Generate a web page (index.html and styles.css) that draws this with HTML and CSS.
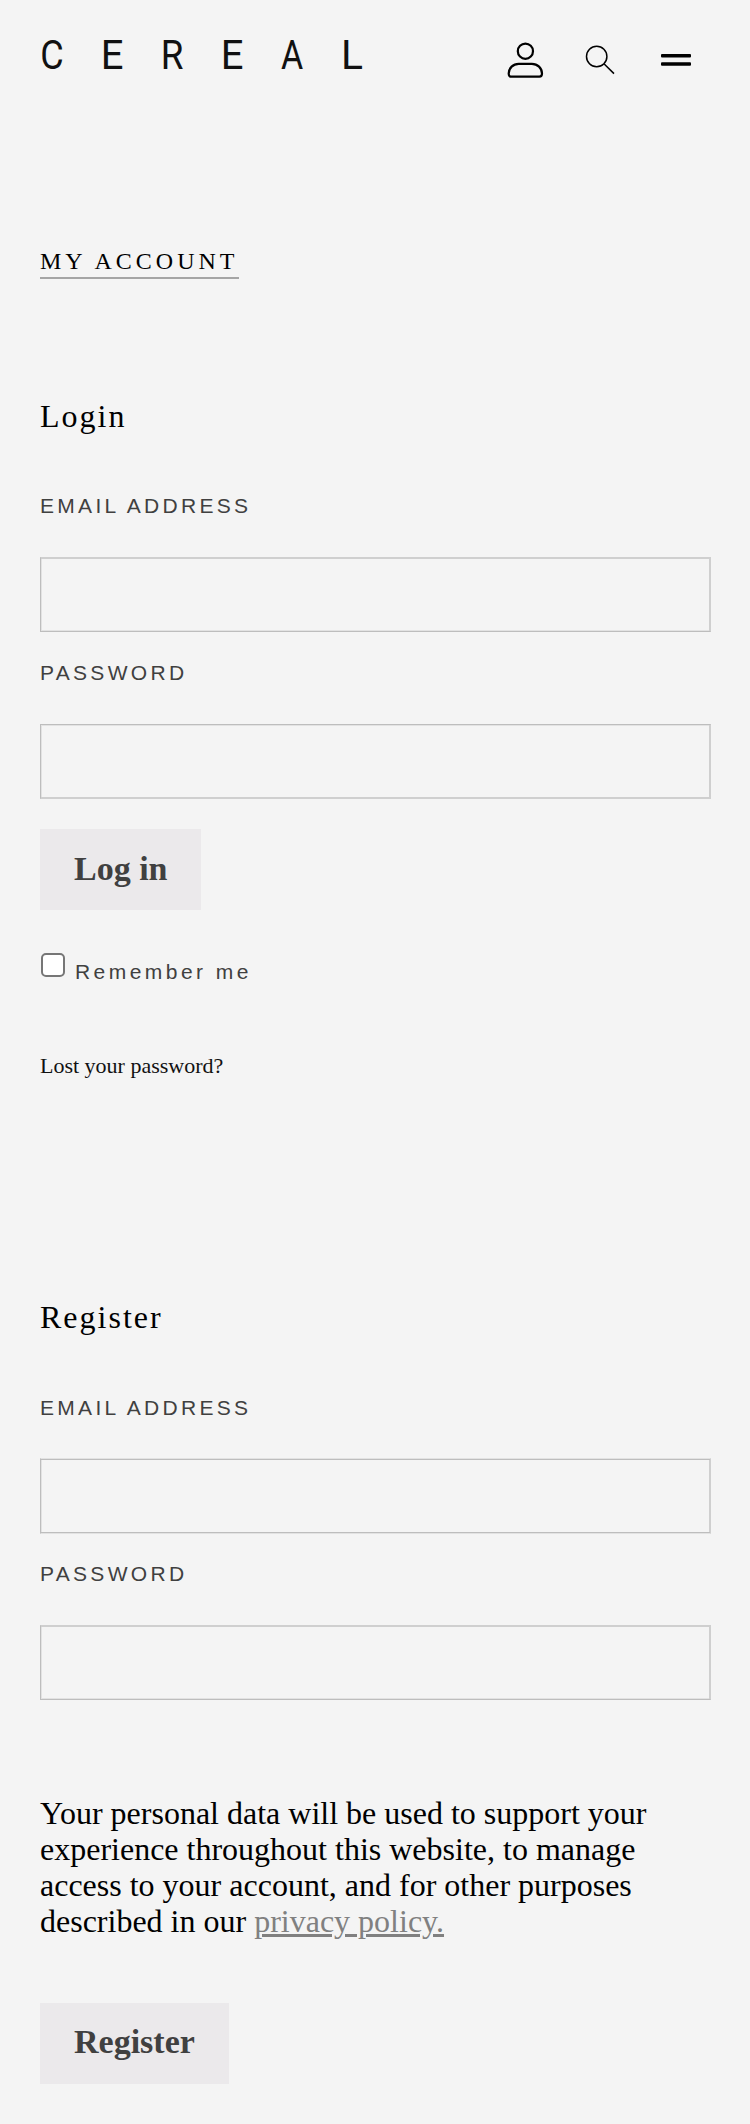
FILE: index.html
```html
<!DOCTYPE html>
<html lang="en">
<head>
<meta charset="utf-8">
<title>My Account - Cereal</title>
<link rel="stylesheet" href="styles.css">
</head>
<body>
<header class="header">
  <div class="logo"><span class="round">C</span><span>E</span><span class="bowl">R</span><span>E</span><span class="peak">A</span><span class="foot">L</span></div>
  <nav class="icons">
    <svg class="icon-user" width="38" height="40" viewBox="0 0 38 40" fill="none" stroke="#000" stroke-width="2.2"><circle cx="19.4" cy="11.2" r="7.6"/><path d="M12.700 23.800h13.200c5.600 0 10.100 4.300 10.100 9.800 0 2-.9 3.100-2.600 3.100H5.400c-1.700 0-2.700-1.100-2.700-3.100 0-5.500 4.400-9.800 10-9.800z"/></svg>
    <svg class="icon-search" width="32" height="32" viewBox="0 0 32 32" fill="none" stroke="#000" stroke-width="1.5"><circle cx="12.700" cy="12.500" r="10.200"/><path d="M20.200 20l9.800 9.600"/></svg>
    <svg class="icon-menu" width="30" height="12" viewBox="0 0 30 12"><rect y="0" width="30" height="3.500" rx="1"/><rect y="8.300" width="30" height="3.500" rx="1"/></svg>
  </nav>
</header>
<main class="page">
  <h1 class="title">MY ACCOUNT</h1>
  <form class="login">
    <h2 class="heading">Login</h2>
    <label class="label" for="le">EMAIL ADDRESS</label>
    <input class="field flat-top" id="le" type="text">
    <label class="label next" for="lp">PASSWORD</label>
    <input class="field flat-bottom" id="lp" type="password">
    <button class="button" type="button">Log in</button>
    <label class="remember"><input class="check" type="checkbox"><span>Remember me</span></label>
    <a class="lost">Lost your password?</a>
  </form>
  <form class="register">
    <h2 class="heading">Register</h2>
    <label class="label" for="re">EMAIL ADDRESS</label>
    <input class="field soft" id="re" type="text">
    <label class="label next" for="rp">PASSWORD</label>
    <input class="field flat-top" id="rp" type="password">
    <p class="privacy">Your personal data will be used to support your experience throughout this website, to manage access to your account, and for other purposes described in our <a class="policy">privacy policy.</a></p>
    <button class="button" type="button">Register</button>
  </form>
</main>
</body>
</html>
```

FILE: styles.css
```css
* { box-sizing: border-box; }
body {
  margin: 0;
  min-height: 2124px;
  background: #f4f4f4;
  color: #000;
  font-family: "Liberation Serif", "Times New Roman", serif;
}
.header {
  display: flex;
  align-items: flex-start;
  justify-content: space-between;
  height: 247px;
  padding: 31px 59px 0 22px;
}
.logo {
  display: grid;
  grid-template-columns: repeat(6, 60px);
  padding-top: 1px;
  font: 40px/48px Roboto, sans-serif;
  color: #111;
  text-align: center;
}
.round { transform: scaleX(.9); }
.bowl { transform: scaleX(.92); }
.peak { transform: scaleX(.85); }
.foot { transform: scaleX(1.02); }
.icons { display: flex; align-items: flex-start; padding-top: 9px; }
.icon-search { margin: 4px 0 0 40px; }
.icon-menu { margin: 14px 0 0 45px; }
.page { padding: 0 39px 0 40px; }
.title {
  width: 199px;
  height: 32px;
  margin: 0;
  border-bottom: 2px solid #a5a5a5;
  font-size: 24px;
  font-weight: 400;
  line-height: 28px;
  letter-spacing: 4px;
  white-space: nowrap;
}
.login, .register { display: flex; flex-direction: column; align-items: flex-start; }
.login { padding-top: 119px; }
.register { padding-top: 220px; }
.heading { margin: 0 0 60px; font-size: 32px; font-weight: 400; line-height: 36px; letter-spacing: 2px; }
.register .heading { margin-bottom: 61px; }
.label, .remember {
  color: #404040;
  font: 21px/24px "Liberation Sans", Arial, sans-serif;
  letter-spacing: 3.3px;
}
.label { margin-bottom: 39px; }
.label.next { margin-top: 29px; }
.register .label { margin-bottom: 38px; }
.register .label.next { margin: 28px 0 39px; }
.field {
  width: 671px;
  height: 75px;
  margin: 0;
  padding: 0 20px;
  border: 1px solid #bdbdbd;
  border-right-color: #cfcfcf;
  border-radius: 0;
  background: transparent;
  outline: 0;
}
.flat-top {
  border-top-color: #cfcfcf;
  box-shadow: inset 0 1px #cfcfcf, inset -1px 0 #cfcfcf, inset 1px 0 #e2e2e2, inset 0 -1px #e2e2e2;
}
.flat-bottom {
  border-bottom-color: #cfcfcf;
  box-shadow: inset 0 -1px #cfcfcf, inset -1px 0 #cfcfcf, inset 1px 0 #e2e2e2, inset 0 1px #e2e2e2;
}
.soft {
  height: 76px;
  border-top-color: #e2e2e2;
  border-bottom-color: #e2e2e2;
  box-shadow: inset 0 1px #bdbdbd, inset 0 -1px #bdbdbd, inset -1px 0 #cfcfcf, inset 1px 0 #e2e2e2;
}
.button {
  height: 81px;
  margin: 30px 0 0;
  padding: 0 33.800px 2px 34px;
  border: 0;
  background: #ebe9eb;
  color: #404040;
  font: bold 34px/40px "Liberation Serif", "Times New Roman", serif;
}
.register .button { padding-bottom: 4px; }
.remember { display: flex; align-items: flex-start; gap: 10px; margin-top: 43px; letter-spacing: 3.450px; }
.remember span { padding-top: 7px; }
.check {
  appearance: none;
  width: 24px;
  height: 24px;
  margin: 0 0 0 1px;
  border: 2px solid #767676;
  border-radius: 5px;
  background: #fff;
}
.lost { margin-top: 69px; font-size: 22px; line-height: 26px; color: #111; }
.privacy { width: 630px; margin: 95px 0 34px; font-size: 32px; line-height: 36px; }
.policy { color: #808080; text-decoration: underline; }
```
